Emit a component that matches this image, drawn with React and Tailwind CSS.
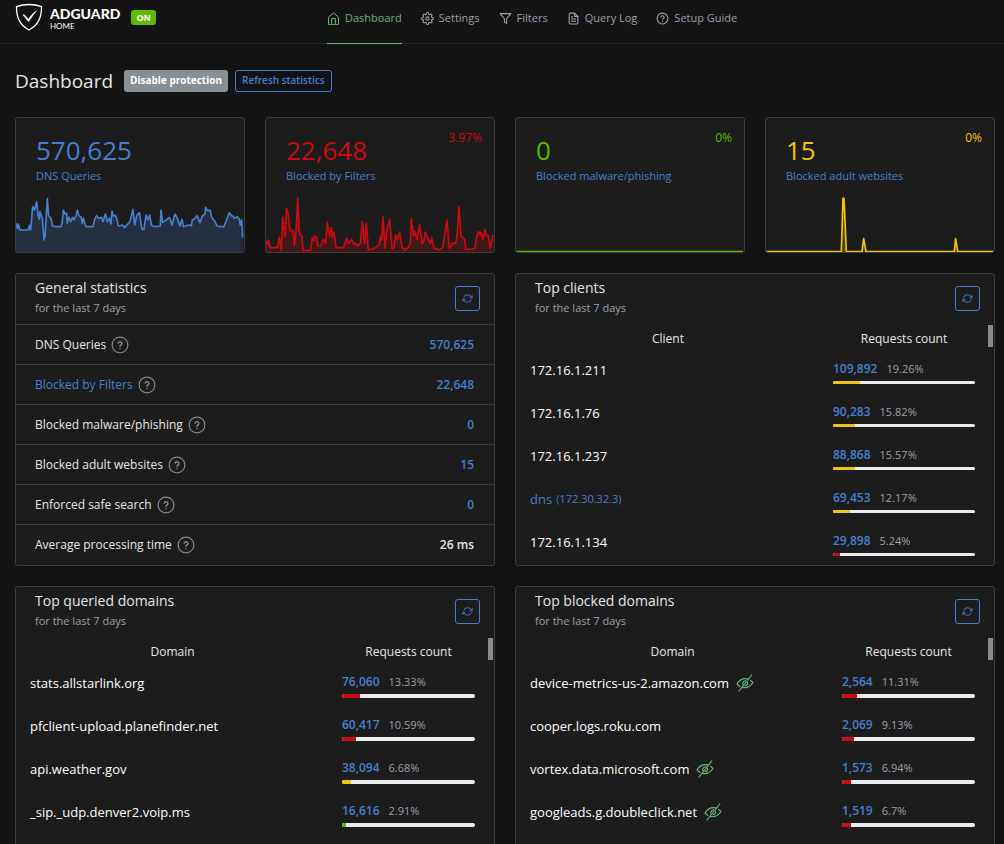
import React from "react";
import { FiSettings, FiFilter, FiFileText, FiHelpCircle } from "react-icons/fi";

const queriesLine =
  "48,340 52,355 55,342 60,360 85,360 88,346 92,360 98,290 103,300 106,290 110,275 114,315 118,328 120,305 127,325 132,390 135,380 142,265 146,318 153,325 158,348 165,350 183,350 187,335 190,300 195,312 200,310 202,340 207,322 212,335 218,322 222,330 228,318 232,300 237,318 243,320 247,340 250,325 258,350 279,350 285,325 290,317 295,325 304,322 309,335 316,312 322,335 328,325 333,342 336,303 340,318 346,316 350,325 355,348 368,345 374,353 390,335 399,298 404,345 411,315 418,308 426,358 432,358 438,315 444,330 449,315 454,345 462,350 481,348 483,300 488,337 496,332 508,322 516,345 525,312 532,325 540,348 546,328 550,350 565,345 574,347 577,330 585,325 591,317 600,338 607,318 615,312 617,292 623,302 630,300 635,322 645,335 651,348 665,350 672,350 688,308 695,318 699,318 703,325 712,320 718,328 721,345 725,330 728,383";
const filtersLine =
  "33,395 37,403 40,390 46,413 67,413 73,382 79,422 83,323 90,380 95,295 100,315 105,362 114,362 118,408 124,350 128,265 133,370 137,375 141,378 144,421 166,421 172,383 176,393 180,377 184,382 189,408 197,408 205,388 212,400 217,337 224,380 229,353 233,382 237,366 243,413 265,413 270,400 275,384 280,402 290,388 297,403 302,400 308,408 316,400 322,335 329,400 334,340 340,420 357,415 372,405 377,378 380,390 384,320 390,415 395,362 404,328 411,415 416,416 422,375 427,390 434,366 441,413 450,420 460,412 466,400 469,325 476,377 479,365 486,388 494,344 501,402 506,395 511,366 520,388 526,402 530,383 537,416 545,416 550,420 563,413 576,330 583,415 592,400 602,400 606,378 612,290 618,378 623,383 629,388 632,418 652,418 660,415 664,385 670,364 675,375 678,366 684,390 690,358 695,377 700,378 706,415 710,395 714,375";
const adultLine =
  "783,425 1009,425 1014,265 1017,265 1024,425 1071,425 1076,386 1083,425 1348,425 1352,386 1358,425 1464,425";

const cards = [
  { value: "570,625", label: "DNS Queries", x0: 48, x1: 728, line: queriesLine, text: "text-[#467fcf]", color: "#467fcf" },
  { value: "22,648", label: "Blocked by Filters", percent: "3.97%", x0: 33, x1: 714, line: filtersLine, text: "text-[#cd0910]", color: "#cd0910" },
  { value: "0", label: "Blocked malware/phishing", percent: "0%", x0: 33, x1: 714, line: "33,425 714,425", text: "text-[#5eba00]", color: "#5eba00" },
  { value: "15", label: "Blocked adult websites", percent: "0%", x0: 783, x1: 1464, line: adultLine, text: "text-[#f1c40f]", color: "#f1c40f" },
];

const stats = [
  { label: "DNS Queries", value: "570,625" },
  { label: "Blocked by Filters", value: "22,648", link: true },
  { label: "Blocked malware/phishing", value: "0" },
  { label: "Blocked adult websites", value: "15" },
  { label: "Enforced safe search", value: "0" },
  { label: "Average processing time", value: "26 ms", plain: true },
];

const YELLOW = "bg-[#f1c40f]";
const RED = "bg-[#cd0910]";
const GREEN = "bg-[#5eba00]";

const clients = [
  { name: "172.16.1.211", count: "109,892", percent: 19.26, bar: YELLOW },
  { name: "172.16.1.76", count: "90,283", percent: 15.82, bar: YELLOW },
  { name: "172.16.1.237", count: "88,868", percent: 15.57, bar: YELLOW },
  { name: "dns", extra: "(172.30.32.3)", count: "69,453", percent: 12.17, bar: YELLOW },
  { name: "172.16.1.134", count: "29,898", percent: 5.24, bar: RED },
];

const queried = [
  { name: "stats.allstarlink.org", count: "76,060", percent: 13.33, bar: RED },
  { name: "pfclient-upload.planefinder.net", count: "60,417", percent: 10.59, bar: RED },
  { name: "api.weather.gov", count: "38,094", percent: 6.68, bar: YELLOW },
  { name: "_sip._udp.denver2.voip.ms", count: "16,616", percent: 2.91, bar: GREEN },
];

const blocked = [
  { name: "device-metrics-us-2.amazon.com", tracker: true, count: "2,564", percent: 11.31, bar: RED },
  { name: "cooper.logs.roku.com", count: "2,069", percent: 9.13, bar: RED },
  { name: "vortex.data.microsoft.com", tracker: true, count: "1,573", percent: 6.94, bar: RED },
  { name: "googleads.g.doubleclick.net", tracker: true, count: "1,519", percent: 6.7, bar: RED },
];

function HomeIcon() {
  return (
    <svg className="h-[13px] w-[13px]" viewBox="0 0 13 13" fill="none" stroke="currentColor" strokeWidth="1" strokeLinejoin="round" strokeLinecap="round" aria-hidden="true">
      <path d="M1.500 12.300V5.200l5-4.200 5 4.200v7.100zM4.600 12.300V6.500h3.800v5.800" />
    </svg>
  );
}

function RefreshIcon() {
  return (
    <svg className="h-[11px] w-[11px] opacity-80" viewBox="0 0 24 24" fill="none" stroke="currentColor" strokeWidth="2.400" strokeLinecap="round" strokeLinejoin="round" aria-hidden="true">
      <path d="M23 5v6h-6zM1 19v-6h6z" fill="currentColor" strokeWidth="1" />
      <path d="M4 9.500a8.500 8.500 0 0 1 14-3.200L21 9M3 15l3 2.800A8.500 8.500 0 0 0 20 14.500" />
    </svg>
  );
}

function TrackerIcon() {
  return (
    <svg className="h-[18px] w-[18px] shrink-0 text-[#66b574]" viewBox="0 0 18 18" fill="none" stroke="currentColor" strokeWidth="1.200" strokeLinecap="round" strokeLinejoin="round" aria-hidden="true">
      <path d="M1 9.800C3.200 6.500 6 4.600 9.500 4.600c1 0 1.900.200 2.700.500M14.500 6.400c1 .6 1.900 1.300 2.500 2.100-2.100 3.300-5 5.200-8.500 5.200-.8 0-1.500-.1-2.200-.300M4 12.400C2.900 11.700 1.900 10.900 1 9.800" />
      <path d="M6.900 10.600C6.300 8.800 7.400 7 9.500 6.800M11.500 8.300c.5 1.700-.6 3.200-2.300 3.400" />
      <path d="M15.800 1 3 17" />
    </svg>
  );
}

function Help() {
  return (
    <svg className="h-[18px] w-[18px] shrink-0 text-[#868686]" viewBox="0 0 24 24" fill="none" stroke="currentColor" strokeWidth="1.600" strokeLinecap="round" strokeLinejoin="round" aria-hidden="true">
      <circle cx="12" cy="12" r="10.500" />
      <path d="M9.600 9.400a2.500 2.500 0 0 1 4.900.800c0 1.700-2.500 2.100-2.500 3.500M12 16.600v.1" strokeWidth="2" />
    </svg>
  );
}

function Spark({ x0, x1, line, color }) {
  return (
    <svg className="block h-14 w-full" viewBox={`${x0} 258 684 168`} preserveAspectRatio="none" aria-hidden="true">
      <polygon points={`${x0},426 ${line} ${x1},426`} fill={color} fillOpacity="0.2" />
      <polyline points={line} fill="none" stroke={color} strokeWidth="5" strokeLinejoin="round" />
    </svg>
  );
}

function StatCard({ card }) {
  return (
    <section className="overflow-hidden rounded-[3px] border border-[#3d3d3d] bg-[#1c1c1c]">
      <div className="flex h-[78px] justify-between pt-[10px] pr-3 pl-5">
        <div className="flex flex-col whitespace-nowrap pt-[5px]">
          <span className={`text-[26px] leading-[34px] ${card.text}`}>{card.value}</span>
          <a href="#" className="text-[11px] leading-[18px] text-[#467fcf]">{card.label}</a>
        </div>
        {card.percent && <span className={`text-[12px] leading-5 ${card.text}`}>{card.percent}</span>}
      </div>
      <Spark {...card} />
    </section>
  );
}

function PanelHeader({ title }) {
  return (
    <header className="flex h-[50px] shrink-0 items-start justify-between pr-[14px] pl-[19px]">
      <div className="pt-[2px]">
        <h2 className="text-[14px] leading-6">{title}</h2>
        <p className="text-[11px] leading-4 text-[#9aa0ac]">for the last 7 days</p>
      </div>
      <button type="button" aria-label="Refresh" className="mt-3 flex h-[25px] w-[25px] items-center justify-center rounded-[3px] border border-[#467fcf] text-[#467fcf]">
        <RefreshIcon />
      </button>
    </header>
  );
}

function TopTable({ title, column, rows, grid, track, className = "" }) {
  return (
    <section className={`overflow-hidden rounded-[3px] border border-[#3d3d3d] bg-[#1c1c1c] ${className}`}>
      <PanelHeader title={title} />
      <div className="flex items-start border-t border-[#181818]">
        <table className="block min-w-0 flex-1 text-[13px]">
          <thead className="block text-[12px]">
            <tr className={`grid h-[25px] items-end leading-[22px] ${grid}`}>
              <th scope="col" className="text-center font-normal">{column}</th>
              <th scope="col" className="text-center font-normal">Requests count</th>
            </tr>
          </thead>
          <tbody className="block">
            {rows.map((row) => (
              <tr key={row.name} className={`grid h-[43px] items-center ${grid}`}>
                <td className="flex items-center gap-[7px] whitespace-nowrap pb-1 pl-[14px] leading-5 text-white">
                  {row.extra ? (
                    <a href="#" className="flex items-center gap-1 text-[#467fcf]">
                      {row.name} <small className="text-[11px]">{row.extra}</small>
                    </a>
                  ) : (
                    row.name
                  )}
                  {row.tracker && <TrackerIcon />}
                </td>
                <td className="pr-[13px] pl-[13px]">
                  <div className="flex items-center gap-[9px] leading-5">
                    <a href="#" className="text-[12px] font-semibold text-[#467fcf]">{row.count}</a>
                    <span className="text-[11px] text-[#9aa0ac]">{row.percent}%</span>
                  </div>
                  <div className={`mt-[2px] overflow-hidden rounded-[2px] bg-[#e9ecef] ${track}`}>
                    <div className={`h-full ${row.bar}`} style={{ width: `${row.percent}%` }} />
                  </div>
                </td>
              </tr>
            ))}
          </tbody>
        </table>
        <div className="mr-px h-[22px] w-[5px] bg-[#8b8b8b]" />
      </div>
    </section>
  );
}

const navItem = "flex h-full items-center gap-[5px] whitespace-nowrap border-b pb-[7px]";
const navIdle = `${navItem} border-transparent`;

export default function App() {
  return (
    <div className="h-screen overflow-hidden bg-[#131313] font-['Open_Sans','Noto_Sans',sans-serif] text-[#e6e6e6]">
      <header className="grid h-11 grid-cols-[312px_1fr] border-b border-[#242424] pl-[15px]">
        <div className="flex items-start pt-[3px]">
          <svg className="h-7 w-7" viewBox="0 0 28 28" fill="none" stroke="#fff" aria-hidden="true">
            <path d="M14 1.500c4 0 8.500.700 12.500 2.200 0 8.500-1.500 17-12.500 23.300C3 20.700 1.500 12.200 1.500 3.700 5.500 2.200 10 1.500 14 1.500z" strokeWidth="1.300" />
            <path d="M8 11.800c.8-.3 1.500 0 2 .6l3.300 3.900c2.200-3.300 4.600-5.900 8-8.300-2.800 3.300-5.300 6.800-7.800 10.800z" fill="#fff" strokeWidth=".6" />
          </svg>
          <div className="ml-[7px] font-['Lato',sans-serif] text-white">
            <div className="pt-[3px] text-[14px] leading-4 font-black">ADGUARD</div>
            <div className="text-[8px] leading-[9px]">HOME</div>
          </div>
          <span className="mt-[7px] ml-[11px] flex h-[15px] items-center rounded-[3px] bg-[#5eba00] px-[5px] text-[9px] font-bold text-white">ON</span>
        </div>
        <nav className="flex h-11 gap-[19px] text-[11px] text-[#9aa0ac]">
          <a href="#" className={`${navItem} border-[#66b574] text-[#66b574]`}><HomeIcon />Dashboard</a>
          <a href="#" className={navIdle}><FiSettings size={13} />Settings</a>
          <a href="#" className={navIdle}><FiFilter size={13} />Filters</a>
          <a href="#" className={navIdle}><FiFileText size={13} />Query Log</a>
          <a href="#" className={navIdle}><FiHelpCircle size={13} />Setup Guide</a>
        </nav>
      </header>

      <main className="pr-[9px] pl-[15px]">
        <div className="flex h-[73px] items-center">
          <h1 className="text-[19px] leading-7">Dashboard</h1>
          <button type="button" className="ml-[11px] h-[22px] rounded-[3px] bg-[#868e96] px-[6px] text-[10px] font-bold text-white">Disable protection</button>
          <button type="button" className="ml-[7px] h-[22px] rounded-[3px] border border-[#467fcf] px-[6px] text-[10px] font-semibold text-[#467fcf]">Refresh statistics</button>
        </div>

        <div className="grid grid-cols-4 gap-5">
          {cards.map((card) => (
            <StatCard key={card.label} card={card} />
          ))}
        </div>

        <div className="mt-5 grid grid-cols-2 gap-5">
          <section className="flex flex-col overflow-hidden rounded-[3px] border border-[#3d3d3d] bg-[#1c1c1c]">
            <PanelHeader title="General statistics" />
            <table className="w-full grow text-[12px]">
              <tbody>
                {stats.map((s) => (
                  <tr key={s.label} className="h-10 border-t border-[#3d3d3d]">
                    <td className="pl-[19px]">
                      <div className="flex items-center gap-[5px]">
                        {s.link ? <a href="#" className="text-[#467fcf]">{s.label}</a> : <span>{s.label}</span>}
                        <Help />
                      </div>
                    </td>
                    <td className="pr-5 text-right font-semibold">
                      <span className={s.plain ? "" : "text-[#467fcf]"}>{s.value}</span>
                    </td>
                  </tr>
                ))}
              </tbody>
            </table>
          </section>
          <TopTable title="Top clients" column="Client" rows={clients} grid="grid-cols-[304fr_168fr]" track="h-[3px]" />
          <TopTable title="Top queried domains" column="Domain" rows={queried} grid="grid-cols-[313fr_159fr]" track="h-1" className="pb-8" />
          <TopTable title="Top blocked domains" column="Domain" rows={blocked} grid="grid-cols-[313fr_159fr]" track="h-1" className="pb-8" />
        </div>
      </main>
    </div>
  );
}
